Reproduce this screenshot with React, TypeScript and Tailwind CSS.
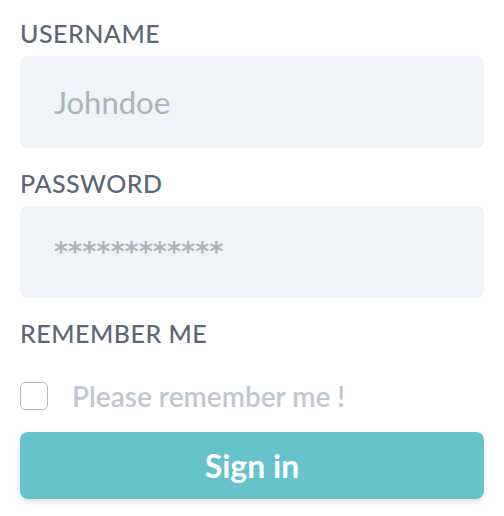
import React from "react";

export default function App() {
  const font = { fontFamily: "Lato, 'Open Sans', sans-serif" };
  return (
    <div className="w-[504px] h-[516px] bg-white px-[20px] pt-[18px]" style={font}>
      <div className="text-[25px] leading-[30px] font-medium text-[#5b6776] tracking-[0.5px]">USERNAME</div>
      <div className="mt-[8px] h-[92px] rounded-[8px] bg-[#f0f4f8] pl-[34px] flex items-center">
        <span className="text-[31px] text-[#abb3bc] leading-none">Johndoe</span>
      </div>
      <div className="mt-[20px] text-[25px] leading-[30px] font-medium text-[#5b6776] tracking-[0.5px]">PASSWORD</div>
      <div className="mt-[8px] h-[92px] rounded-[8px] bg-[#f0f4f8] pl-[34px] flex items-center">
        <span className="text-[27px] font-bold text-[#abb3bc] leading-none font-['DejaVu_Sans',sans-serif] -mt-[2px]">************</span>
      </div>
      <div className="mt-[20px] text-[25px] leading-[30px] font-medium text-[#5b6776] tracking-[0.5px]">REMEMBER ME</div>
      <div className="mt-[34px] flex items-center h-[28px]">
        <div className="w-[28px] h-[28px] rounded-[5px] border border-[#b8b8b8] bg-white" />
        <span className="ml-[24px] text-[28px] font-semibold text-[#c0c7d0] leading-none">Please remember me !</span>
      </div>
      <div className="mt-[22px] h-[67px] rounded-[8px] bg-[#66c2cb] flex items-center justify-center shadow-[0_3px_6px_rgba(0,0,0,0.12)]">
        <span className="text-[32px] font-bold text-white leading-none">Sign in</span>
      </div>
    </div>
  );
}
